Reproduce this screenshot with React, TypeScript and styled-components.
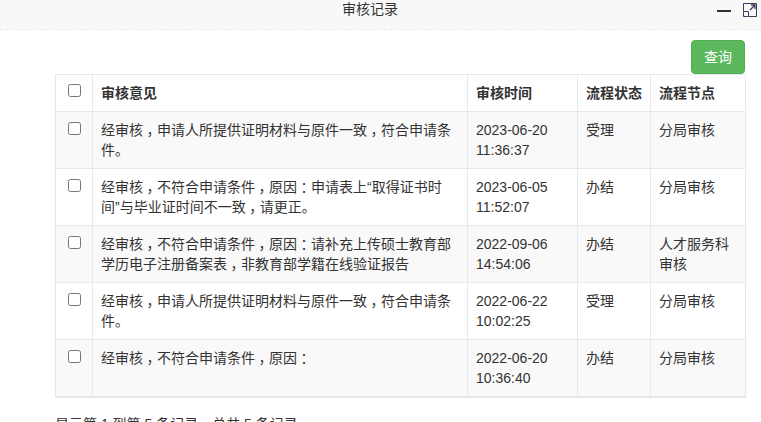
import styled, { createGlobalStyle } from 'styled-components';

const GlobalStyle = createGlobalStyle`
  html, body {
    margin: 0;
    padding: 0;
    height: 422px;
    overflow: hidden;
    background: #fff;
  }
  body {
    font-family: "Liberation Sans", "Noto Sans CJK SC", sans-serif;
    font-size: 14px;
    line-height: 20px;
    color: #333;
  }
`;

const TitleBar = styled.div`
  position: relative;
  height: 29px;
  background: #f8f8f8;
  border-bottom: 1px dashed #e7e7e7;
  display: flex;
  justify-content: center;
  align-items: flex-start;
  padding-right: 21px;
  color: #333;
  line-height: 18px;
`;

const WinTools = styled.div`
  position: absolute;
  right: 4px;
  top: 3px;
  display: flex;
  align-items: center;
  gap: 12px;
`;

const Body = styled.div`
  padding: 10px 16px 0 55px;
`;

const Toolbar = styled.div`
  display: flex;
  justify-content: flex-end;
`;

const QueryButton = styled.button`
  width: 54px;
  height: 34px;
  border: 1px solid #4cae4c;
  border-radius: 4px;
  background: #5cb85c;
  color: #fff;
  font: inherit;
  font-size: 14px;
  padding: 0;
`;

const Table = styled.table`
  width: 690px;
  table-layout: fixed;
  border-collapse: collapse;
  border: 1px solid #e7eaec;
  border-bottom: 2px solid #e7eaec;
`;

const Th = styled.th`
  text-align: left;
  font-weight: 700;
  height: 36px;
  padding: 8px;
  box-sizing: border-box;
  border: 1px solid #e7eaec;
  vertical-align: top;
`;

const Td = styled.td`
  padding: 8px;
  height: 57px;
  box-sizing: border-box;
  border: 1px solid #e7eaec;
  vertical-align: top;
`;

const Row = styled.tr`
  background: #f9f9f9;
  &:nth-child(even) {
    background: #fff;
  }
`;

const CheckCell = styled.div<{ $top: number }>`
  display: flex;
  justify-content: center;
  padding-top: ${(p) => p.$top}px;
`;

const Check = styled.input.attrs({ type: 'checkbox' })`
  width: 13px;
  height: 13px;
  margin: 0;
`;

/* comma and colon sit in the middle of their em box in the original font */
const Punct = styled.span`
  display: inline-block;
  width: 1em;
  text-align: center;
  font-feature-settings: 'halt';
`;

const Footer = styled.div`
  margin-top: 16px;
`;

const rows = [
  ['经审核，申请人所提供证明材料与原件一致，符合申请条件。', '2023-06-20 11:36:37', '受理', '分局审核'],
  ['经审核，不符合申请条件，原因：申请表上“取得证书时间”与毕业证时间不一致，请更正。', '2023-06-05 11:52:07', '办结', '分局审核'],
  ['经审核，不符合申请条件，原因：请补充上传硕士教育部学历电子注册备案表，非教育部学籍在线验证报告', '2022-09-06 14:54:06', '办结', '人才服务科审核'],
  ['经审核，申请人所提供证明材料与原件一致，符合申请条件。', '2022-06-22 10:02:25', '受理', '分局审核'],
  ['经审核，不符合申请条件，原因：', '2022-06-20 10:36:40', '办结', '分局审核'],
];

const withPunct = (text: string) =>
  text.split(/([，：])/).map((part, i) =>
    i % 2 ? <Punct key={i}>{part}</Punct> : <span key={i}>{part}</span>,
  );

export default function App() {
  return (
    <>
      <GlobalStyle />
      <TitleBar>
        审核记录
        <WinTools>
          <svg width="14" height="14" viewBox="0 0 14 14">
            <path d="M0 8h14" stroke="#2f2f2f" strokeWidth="2" />
          </svg>
          <svg width="14" height="14" viewBox="0 0 14 14" fill="none" stroke="#3a3a5c">
            <path d="M.5 8V.5h13v13H6" />
            <path d="M.5 8.500h5v5h-5z" />
            <path d="M7 7l5-5M8 2h4v4" strokeWidth="1.300" />
          </svg>
        </WinTools>
      </TitleBar>
      <Body>
        <Toolbar>
          <QueryButton>查询</QueryButton>
        </Toolbar>
        <Table>
          <colgroup>
            <col width="37" />
            <col width="375" />
            <col width="110" />
            <col width="73" />
            <col width="95" />
          </colgroup>
          <thead>
            <tr>
              <Th>
                <CheckCell $top={1}>
                  <Check />
                </CheckCell>
              </Th>
              <Th>审核意见</Th>
              <Th>审核时间</Th>
              <Th>流程状态</Th>
              <Th>流程节点</Th>
            </tr>
          </thead>
          <tbody>
            {rows.map((r) => (
              <Row key={r[1]}>
                <Td>
                  <CheckCell $top={2}>
                    <Check />
                  </CheckCell>
                </Td>
                <Td>{withPunct(r[0])}</Td>
                <Td>{r[1]}</Td>
                <Td>{r[2]}</Td>
                <Td>{r[3]}</Td>
              </Row>
            ))}
          </tbody>
        </Table>
        <Footer>显示第 1 到第 5 条记录，总共 5 条记录</Footer>
      </Body>
    </>
  );
}
